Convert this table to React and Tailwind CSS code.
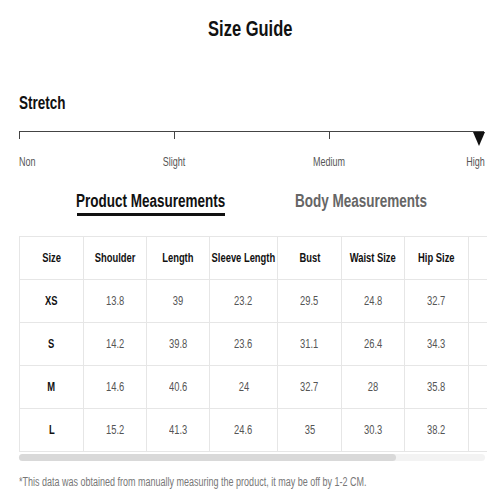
import React from 'react';

// Liberation Sans squeezed horizontally to get the condensed look of the reference
function Narrow({ children, className = '' }) {
  return <span className={`inline-block whitespace-nowrap scale-x-75 ${className}`}>{children}</span>;
}

const columns = [
  { label: 'Size', w: 'w-[64px]' },
  { label: 'Shoulder', w: 'w-[63px]' },
  { label: 'Length', w: 'w-[63px]' },
  { label: 'Sleeve Length', w: 'w-[68px]' },
  { label: 'Bust', w: 'w-[64px]' },
  { label: 'Waist Size', w: 'w-[63px]' },
  { label: 'Hip Size', w: 'w-[64px]' },
  { label: '', w: 'w-[64px]' },
];

const rows = [
  ['XS', '13.8', '39', '23.2', '29.5', '24.8', '32.7', ''],
  ['S', '14.2', '39.8', '23.6', '31.1', '26.4', '34.3', ''],
  ['M', '14.6', '40.6', '24', '32.7', '28', '35.8', ''],
  ['L', '15.2', '41.3', '24.6', '35', '30.3', '38.2', ''],
];

function StretchScale() {
  return (
    <div className="mx-[19px] w-[465px]">
      <div className="relative grid grid-cols-3 border-t border-[#444]">
        <div className="h-[7px] border-l border-[#444]" />
        <div className="h-[7px] border-l border-[#444]" />
        <div className="h-[7px] border-l border-[#444]" />
        <svg className="absolute right-[-1px] top-[0px] h-[14px] w-[12px]" viewBox="0 0 12 14">
          <polygon points="0,0 12,0 6,14" fill="#111" />
        </svg>
      </div>
      <div className="mt-[15px] grid grid-cols-3 text-[12px] leading-[16px] text-[#555]">
        <div>
          <Narrow className="origin-left">Non</Narrow>
        </div>
        <div>
          <Narrow className="-translate-x-1/2">Slight</Narrow>
        </div>
        <div className="flex justify-between">
          <Narrow className="-translate-x-1/2">Medium</Narrow>
          <Narrow className="origin-right translate-x-[1px]">High</Narrow>
        </div>
      </div>
    </div>
  );
}

function MeasurementTable() {
  return (
    <div className="mx-[19px] w-[468px]">
      <div className="overflow-hidden">
        <table className="w-[513px] table-fixed border-collapse text-[12.5px]">
          <thead>
            <tr>
              {columns.map((c, i) => (
                <th
                  key={i}
                  className={`${c.w} h-[43px] border border-[#e6e6e6] p-0 font-bold text-[#111]`}
                >
                  <div className="flex justify-center">
                    <Narrow>{c.label}</Narrow>
                  </div>
                </th>
              ))}
            </tr>
          </thead>
          <tbody>
            {rows.map((row, r) => (
              <tr key={r}>
                {row.map((cell, i) => (
                  <td
                    key={i}
                    className={`h-[43px] border border-[#e6e6e6] p-0 ${
                      i === 0 ? 'font-bold text-[#111]' : 'text-[#555]'
                    }`}
                  >
                    <div className="flex justify-center">
                      <Narrow>{cell}</Narrow>
                    </div>
                  </td>
                ))}
              </tr>
            ))}
          </tbody>
        </table>
      </div>
      {/* scrollbar under the clipped table */}
      <div className="mt-[2px] h-[7px] w-[466px] rounded-full bg-[#f3f3f3]">
        <div className="h-full w-[377px] rounded-full bg-[#d9d9d9]" />
      </div>
    </div>
  );
}

export default function App() {
  return (
    <div
      className="h-[500px] w-[500px] overflow-hidden bg-white"
      style={{ fontFamily: '"Liberation Sans", Arial, sans-serif' }}
    >
      <h1 className="pt-[17px] text-center text-[22px] font-bold leading-[24px] text-[#111]">
        <Narrow>Size Guide</Narrow>
      </h1>

      <h2 className="ml-[19px] mt-[51px] text-[18px] font-bold leading-[22px] text-[#111]">
        <Narrow className="origin-left">Stretch</Narrow>
      </h2>

      <div className="mt-[17px]">
        <StretchScale />
      </div>

      {/* Tabs */}
      <div className="mt-[20px] flex gap-[71px] pl-[77px]">
        <div className="flex w-[148px] flex-col">
          <div className="flex justify-center text-[18px] font-bold leading-[22px] text-[#111]">
            <Narrow>Product Measurements</Narrow>
          </div>
          <div className="mt-[1px] h-[3px] bg-[#111]" />
        </div>
        <div className="flex w-[131px] justify-center text-[18px] font-bold leading-[22px] text-[#666]">
          <Narrow>Body Measurements</Narrow>
        </div>
      </div>

      <div className="mt-[20px]">
        <MeasurementTable />
      </div>

      <p className="ml-[19px] mt-[13px] text-[12px] leading-[16px] text-[#777]">
        <Narrow className="origin-left">
          *This data was obtained from manually measuring the product, it may be off by 1-2 CM.
        </Narrow>
      </p>
    </div>
  );
}
